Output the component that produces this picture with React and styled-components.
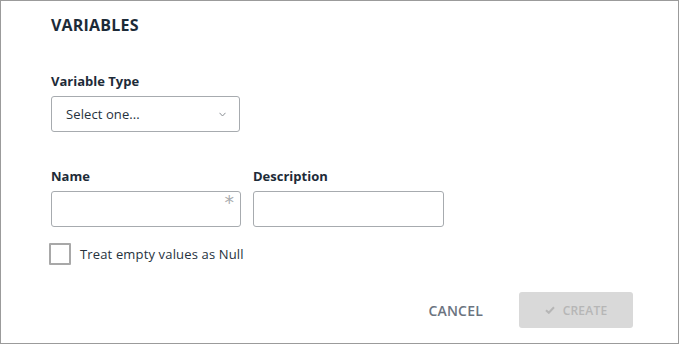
import React from "react";
import styled, { createGlobalStyle } from "styled-components";

const Global = createGlobalStyle`
  html, body { margin: 0; padding: 0; background: #fff; }
  body { font-family: "Open Sans", Lato, sans-serif; -webkit-font-smoothing: antialiased; }
  * { box-sizing: border-box; }
`;

const Frame = styled.div`
  width: 679px;
  height: 344px;
  border: 1px solid #9b9b9b;
  background: #fff;
  padding: 15px 45px 15px 50px;
  display: flex;
  flex-direction: column;
`;

const Heading = styled.h2`
  margin: 0;
  font-size: 16px;
  line-height: 18px;
  font-weight: 700;
  color: #1d2b38;
  letter-spacing: 0.2px;
`;

const Field = styled.div`
  display: flex;
  flex-direction: column;
  width: ${(p) => p.$width}px;
  margin-top: ${(p) => p.$top || 0}px;
`;

const Label = styled.label`
  font-size: 13px;
  line-height: 16px;
  font-weight: 700;
  color: #1d2b38;
  margin-bottom: 7px;
`;

const SelectBox = styled.div`
  height: 36px;
  border: 1px solid #a7abaf;
  border-radius: 3px;
  display: flex;
  align-items: center;
  justify-content: space-between;
  padding: 0 13px 0 14px;
  font-size: 13px;
  color: #26323d;
  letter-spacing: 0.1px;
`;

const Row = styled.div`
  display: flex;
  gap: 12px;
  margin-top: 36px;
`;

const InputWrap = styled.div`
  position: relative;
  height: 36px;
`;

const Input = styled.input`
  width: 100%;
  height: 100%;
  border: 1px solid #a7abaf;
  border-radius: 3px;
  font-family: inherit;
  font-size: 13px;
  padding: 0 14px;
  outline: none;
`;

const Required = styled.span`
  position: absolute;
  top: 2px;
  right: 7px;
  font-size: 19px;
  line-height: 19px;
  color: #a9acaf;
  font-family: "DejaVu Sans", sans-serif;
`;

const CheckRow = styled.label`
  display: flex;
  align-items: center;
  gap: 9px;
  margin-top: 16px;
  margin-left: -2px;
  font-size: 13px;
  color: #26323d;
  letter-spacing: 0.15px;
`;

const Box = styled.span`
  width: 22px;
  height: 22px;
  border: 2px solid #a8a8a8;
  border-radius: 1px;
`;

const Footer = styled.div`
  margin-top: auto;
  display: flex;
  justify-content: flex-end;
  align-items: center;
  gap: 20px;
`;

const TextButton = styled.button`
  background: transparent;
  border: 0;
  padding: 0 16px;
  height: 36px;
  font-family: inherit;
  font-size: 14px;
  font-weight: 600;
  color: #6b7480;
  letter-spacing: 0.2px;
`;

const PrimaryButton = styled.button`
  width: 114px;
  height: 36px;
  border: 0;
  border-radius: 3px;
  background: #d9d9d9;
  color: #b6b6b6;
  font-family: inherit;
  font-size: 12px;
  font-weight: 600;
  display: flex;
  align-items: center;
  justify-content: center;
  gap: 8px;
  padding: 0;
  letter-spacing: 0.2px;
`;

export default function App() {
  return (
    <>
      <Global />
      <Frame>
        <Heading>VARIABLES</Heading>
        <Field $width={189} $top={39}>
          <Label>Variable Type</Label>
          <SelectBox>
            <span>Select one...</span>
            <svg width="7" height="5" viewBox="0 0 7 5">
              <path d="M0.5 0.8 L3.5 4 L6.5 0.8" fill="none" stroke="#8a8f95" strokeWidth="1" />
            </svg>
          </SelectBox>
        </Field>
        <Row>
          <Field $width={190}>
            <Label>Name</Label>
            <InputWrap>
              <Input />
              <Required>*</Required>
            </InputWrap>
          </Field>
          <Field $width={191}>
            <Label>Description</Label>
            <InputWrap>
              <Input />
            </InputWrap>
          </Field>
        </Row>
        <CheckRow>
          <Box />
          <span>Treat empty values as Null</span>
        </CheckRow>
        <Footer>
          <TextButton>CANCEL</TextButton>
          <PrimaryButton>
            <svg width="10" height="8" viewBox="0 0 10 8">
              <path d="M1 4.2 L3.8 6.8 L9 1.2" fill="none" stroke="#b6b6b6" strokeWidth="2" />
            </svg>
            <span>CREATE</span>
          </PrimaryButton>
        </Footer>
      </Frame>
    </>
  );
}
